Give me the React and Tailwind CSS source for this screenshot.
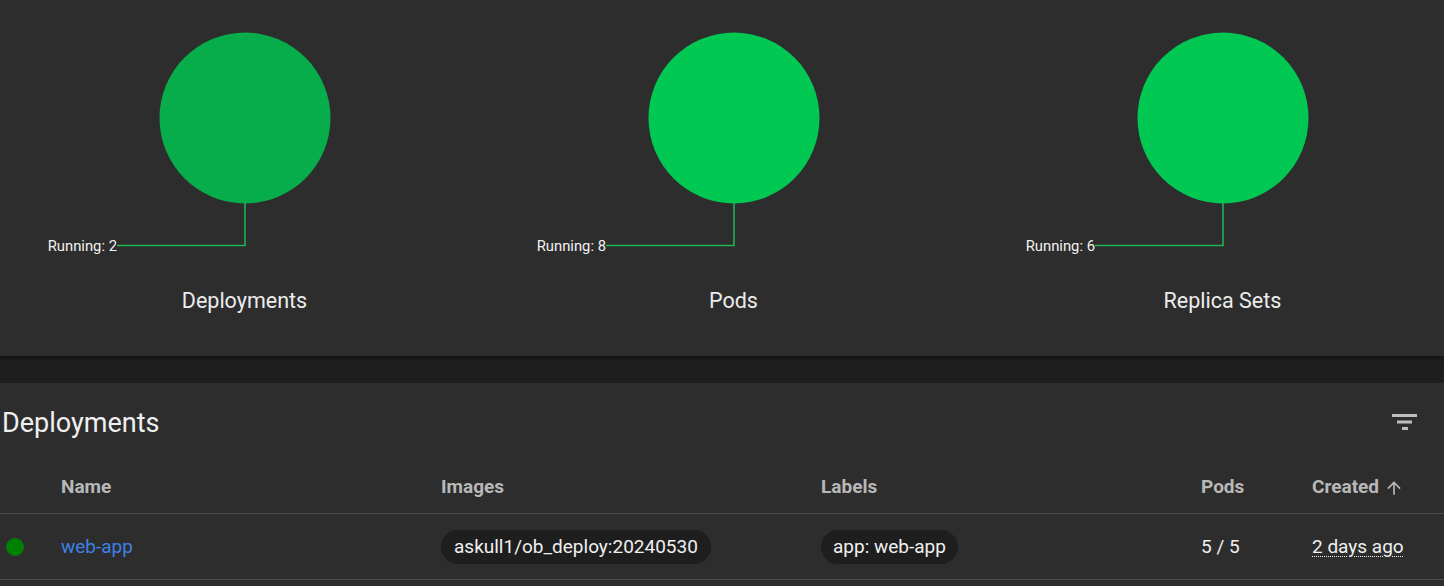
import { useState } from 'react';

const charts = [
  { title: 'Deployments', running: 2, fill: '#07ad4a' },
  { title: 'Pods', running: 8, fill: '#00c853' },
  { title: 'Replica Sets', running: 6, fill: '#00c853' },
];

function FilterIcon() {
  return (
    <svg width="26" height="18" viewBox="0 0 26 18" className="text-[#bdbdbd]">
      <rect x="0" y="0" width="25" height="3" fill="currentColor" />
      <rect x="5" y="6.5" width="15" height="3" fill="currentColor" />
      <rect x="10" y="13" width="6" height="3" fill="currentColor" />
    </svg>
  );
}

function StatusChart({ title, running, fill }) {
  return (
    <div className="w-[489px] shrink-0 flex flex-col items-center">
      <svg width="489" height="270" viewBox="0 0 489 270">
        <circle cx="245" cy="118" r="85.5" fill={fill} />
        <polyline points="245,203 245,245.5 117,245.5" fill="none" stroke="#1db954" strokeWidth="1.5" />
        <text x="117" y="250.5" textAnchor="end" fill="#f2f2f2" fontSize="14.8" fontFamily="Roboto, sans-serif">
          Running: {running}
        </text>
      </svg>
      <div className="mt-[20px] text-[21.5px] text-[#ececec] leading-none">{title}</div>
    </div>
  );
}

export default function App() {
  const [sortAsc] = useState(true);

  return (
    <div className="w-[1444px] h-[586px] overflow-hidden bg-[#1e1e1e] font-['Roboto',sans-serif]">
      {/* graficos de status */}
      <div className="h-[356px] bg-[#2d2d2d] flex overflow-hidden shadow-[0_2px_4px_rgba(0,0,0,0.5)] relative z-10">
        {charts.map(c => <StatusChart key={c.title} {...c} />)}
      </div>

      <div className="h-[27px]" />

      {/* tabela */}
      <div className="bg-[#2d2d2d] h-[300px]">
        <div className="h-[79px] flex items-center justify-between pl-[2px] pr-[26px] pt-[1px]">
          <h2 className="text-[27px] text-[#f0f0f0] font-normal">Deployments</h2>
          <FilterIcon />
        </div>

        <div className="grid grid-cols-[61px_380px_380px_380px_111px_1fr] h-[52px] items-center border-b border-[#4a4a4a] text-[19px] font-bold text-[#b8b8b8]">
          <div />
          <div>Name</div>
          <div>Images</div>
          <div>Labels</div>
          <div>Pods</div>
          <div className="flex items-center gap-[5px]">
            Created
            <svg width="20" height="20" viewBox="0 0 24 24" fill="currentColor" className={sortAsc ? '' : 'rotate-180'}>
              <path d="M4 12l1.41 1.41L11 7.83V20h2V7.83l5.58 5.59L20 12l-8-8-8 8z" />
            </svg>
          </div>
        </div>

        <div className="grid grid-cols-[61px_380px_380px_380px_111px_1fr] h-[66px] items-center border-b border-[#4a4a4a] text-[19px] text-[#f0f0f0] pt-[1px]">
          <div className="pl-[6px]">
            <div className="w-[18px] h-[18px] rounded-full bg-[#008000]" />
          </div>
          <div className="text-[#3d80e6]">web-app</div>
          <div>
            <span className="inline-flex items-center h-[34px] px-[13px] rounded-full bg-[#1e1e1e]">askull1/ob_deploy:20240530</span>
          </div>
          <div>
            <span className="inline-flex items-center h-[34px] px-[12px] rounded-full bg-[#1e1e1e]">app: web-app</span>
          </div>
          <div>5 / 5</div>
          <div>
            <span className="underline decoration-dotted decoration-1 underline-offset-[3px]">2 days ago</span>
          </div>
        </div>
      </div>
    </div>
  );
}
